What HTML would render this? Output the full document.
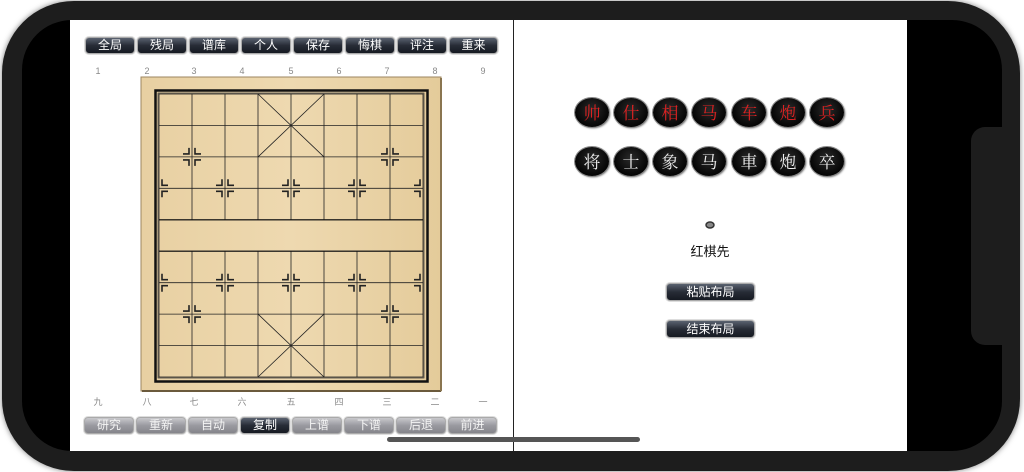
<!DOCTYPE html>
<html><head><meta charset="utf-8"><style>
*{margin:0;padding:0;box-sizing:border-box}
body{width:1024px;height:472px;background:#fff;overflow:hidden;position:relative;font-family:"Liberation Sans","Noto Sans CJK SC",sans-serif}
.frame{position:absolute;left:2px;top:1px;width:1018px;height:470px;background:#1d1d1d;border-radius:72px;box-shadow:0 0 6px rgba(0,0,0,.5)}
.inner{position:absolute;left:22px;top:20px;width:980px;height:431px;background:#000;border-radius:50px}
.notch{position:absolute;left:971px;top:127px;width:40px;height:218px;background:#1d1d1d;border-radius:14px 0 0 14px}
.screen{position:absolute;left:70px;top:20px;width:837px;height:431px;background:#fff}
.btn{position:absolute;height:17px;border-radius:4px;border:1px solid #aaa;box-shadow:0 0 0 1px #ddd;color:#fff;font-size:12px;line-height:15px;text-align:center;background:linear-gradient(#5a6270,#272c36 50%,#161a22)}
.g{background:linear-gradient(#c8c8cc,#9a9aa0 50%,#85858b);color:#f4f4f4}
.lbl{position:absolute;font-size:9px;color:#888;width:20px;text-align:center}
.pc{position:absolute;width:34px;height:29px;border-radius:50%;background:radial-gradient(circle at 50% 40%,#2a2a2a,#050505 70%);box-shadow:0 0 0 1px #888, 1px 1px 2px #555;font-size:17px;line-height:28px;text-align:center;font-family:"Noto Serif CJK SC","Noto Sans CJK SC",serif}
</style></head><body>
<div class="frame"></div><div class="inner"></div><div class="notch"></div>
<div class="screen"></div>
<div style="position:absolute;left:513px;top:20px;width:1px;height:431px;background:#222"></div>

<div class="btn" style="left:85px;top:37px;width:50px">全局</div>
<div class="btn" style="left:137px;top:37px;width:50px">残局</div>
<div class="btn" style="left:189px;top:37px;width:50px">谱库</div>
<div class="btn" style="left:241px;top:37px;width:50px">个人</div>
<div class="btn" style="left:293px;top:37px;width:50px">保存</div>
<div class="btn" style="left:345px;top:37px;width:50px">悔棋</div>
<div class="btn" style="left:397px;top:37px;width:50px">评注</div>
<div class="btn" style="left:449px;top:37px;width:49px">重来</div>

<div class="btn g" style="left:84px;top:417px;width:50px">研究</div>
<div class="btn g" style="left:136px;top:417px;width:50px">重新</div>
<div class="btn g" style="left:188px;top:417px;width:50px">自动</div>
<div class="btn" style="left:240px;top:417px;width:50px">复制</div>
<div class="btn g" style="left:292px;top:417px;width:50px">上谱</div>
<div class="btn g" style="left:344px;top:417px;width:50px">下谱</div>
<div class="btn g" style="left:396px;top:417px;width:50px">后退</div>
<div class="btn g" style="left:448px;top:417px;width:49px">前进</div>

<div class="lbl" style="left:88px;top:66px">1</div><div class="lbl" style="left:137px;top:66px">2</div><div class="lbl" style="left:184px;top:66px">3</div><div class="lbl" style="left:232px;top:66px">4</div><div class="lbl" style="left:281px;top:66px">5</div><div class="lbl" style="left:329px;top:66px">6</div><div class="lbl" style="left:377px;top:66px">7</div><div class="lbl" style="left:425px;top:66px">8</div><div class="lbl" style="left:473px;top:66px">9</div>
<div class="lbl" style="left:88px;top:395px">九</div><div class="lbl" style="left:137px;top:395px">八</div><div class="lbl" style="left:184px;top:395px">七</div><div class="lbl" style="left:232px;top:395px">六</div><div class="lbl" style="left:281px;top:395px">五</div><div class="lbl" style="left:329px;top:395px">四</div><div class="lbl" style="left:377px;top:395px">三</div><div class="lbl" style="left:425px;top:395px">二</div><div class="lbl" style="left:473px;top:395px">一</div>

<svg style="position:absolute;left:0;top:0" width="1024" height="472">
<defs><linearGradient id="w" x1="0" x2="1"><stop offset="0" stop-color="#e8d0a2"/><stop offset=".5" stop-color="#eed9b0"/><stop offset="1" stop-color="#e4cb9a"/></linearGradient></defs>
<rect x="141" y="77" width="300" height="314" fill="url(#w)" stroke="#9c8660" stroke-width="1"/>
<line x1="142" y1="391" x2="441" y2="391" stroke="#6b5a3c" stroke-width="2"/>
<line x1="441" y1="78" x2="441" y2="391" stroke="#8a7550" stroke-width="2"/>
<rect x="155.5" y="90.5" width="272" height="291" fill="none" stroke="#111" stroke-width="2.5"/>
<rect x="158" y="93" width="266" height="285" fill="none" stroke="#333" stroke-width="0.7"/>
<g stroke="#222" stroke-width="0.8" fill="none">
<rect x="159" y="94" width="264" height="283"/>
<path d="M159 125.4H423M159 156.9H423M159 188.3H423M159 219.8H423M159 251.2H423M159 282.7H423M159 314.1H423M159 345.6H423"/>
<path d="M192 94V219.8M225 94V219.8M258 94V219.8M291 94V219.8M324 94V219.8M357 94V219.8M390 94V219.8M192 251.2V377M225 251.2V377M258 251.2V377M291 251.2V377M324 251.2V377M357 251.2V377M390 251.2V377"/>
<path d="M258 94L324 156.9M324 94L258 156.9M258 314.1L324 377M324 314.1L258 377"/>
</g>
<line x1="159" y1="219.8" x2="423" y2="219.8" stroke="#111" stroke-width="1.2"/>
<line x1="159" y1="251.2" x2="423" y2="251.2" stroke="#111" stroke-width="1.2"/>
<g stroke="#222" stroke-width="1.6" fill="none">
<path d="M-9-3h6v-6M9-3h-6v-6M-9 3h6v6M9 3h-6v6" transform="translate(192,156.9)"/>
<path d="M-9-3h6v-6M9-3h-6v-6M-9 3h6v6M9 3h-6v6" transform="translate(390,156.9)"/>
<path d="M-9-3h6v-6M9-3h-6v-6M-9 3h6v6M9 3h-6v6" transform="translate(192,314.1)"/>
<path d="M-9-3h6v-6M9-3h-6v-6M-9 3h6v6M9 3h-6v6" transform="translate(390,314.1)"/>
<path d="M-9-3h6v-6M9-3h-6v-6M-9 3h6v6M9 3h-6v6" transform="translate(225,188.3)"/>
<path d="M-9-3h6v-6M9-3h-6v-6M-9 3h6v6M9 3h-6v6" transform="translate(291,188.3)"/>
<path d="M-9-3h6v-6M9-3h-6v-6M-9 3h6v6M9 3h-6v6" transform="translate(357,188.3)"/>
<path d="M-9-3h6v-6M9-3h-6v-6M-9 3h6v6M9 3h-6v6" transform="translate(225,282.7)"/>
<path d="M-9-3h6v-6M9-3h-6v-6M-9 3h6v6M9 3h-6v6" transform="translate(291,282.7)"/>
<path d="M-9-3h6v-6M9-3h-6v-6M-9 3h6v6M9 3h-6v6" transform="translate(357,282.7)"/>
<path d="M9-3h-6v-6M9 3h-6v6" transform="translate(159,188.3)"/>
<path d="M9-3h-6v-6M9 3h-6v6" transform="translate(159,282.7)"/>
<path d="M-9-3h6v-6M-9 3h6v6" transform="translate(423,188.3)"/>
<path d="M-9-3h6v-6M-9 3h6v6" transform="translate(423,282.7)"/>
</g>
<rect x="387" y="437" width="253" height="5" rx="2.5" fill="#555"/>
<ellipse cx="710" cy="225" rx="4" ry="3" fill="#888" stroke="#333" stroke-width="1.5"/>
</svg>

<div class="pc" style="left:575px;top:98px;color:#d22">帅</div>
<div class="pc" style="left:614px;top:98px;color:#d22">仕</div>
<div class="pc" style="left:653px;top:98px;color:#d22">相</div>
<div class="pc" style="left:692px;top:98px;color:#d22">马</div>
<div class="pc" style="left:732px;top:98px;color:#d22">车</div>
<div class="pc" style="left:771px;top:98px;color:#d22">炮</div>
<div class="pc" style="left:810px;top:98px;color:#d22">兵</div>
<div class="pc" style="left:575px;top:147px;color:#eee">将</div>
<div class="pc" style="left:614px;top:147px;color:#eee">士</div>
<div class="pc" style="left:653px;top:147px;color:#eee">象</div>
<div class="pc" style="left:692px;top:147px;color:#eee">马</div>
<div class="pc" style="left:732px;top:147px;color:#eee">車</div>
<div class="pc" style="left:771px;top:147px;color:#eee">炮</div>
<div class="pc" style="left:810px;top:147px;color:#eee">卒</div>

<div style="position:absolute;left:660px;top:241px;width:100px;text-align:center;font-size:13px;color:#111">红棋先</div>
<div class="btn" style="left:666px;top:283px;width:89px;height:18px;line-height:16px">粘贴布局</div>
<div class="btn" style="left:666px;top:320px;width:89px;height:18px;line-height:16px">结束布局</div>
</body></html>
